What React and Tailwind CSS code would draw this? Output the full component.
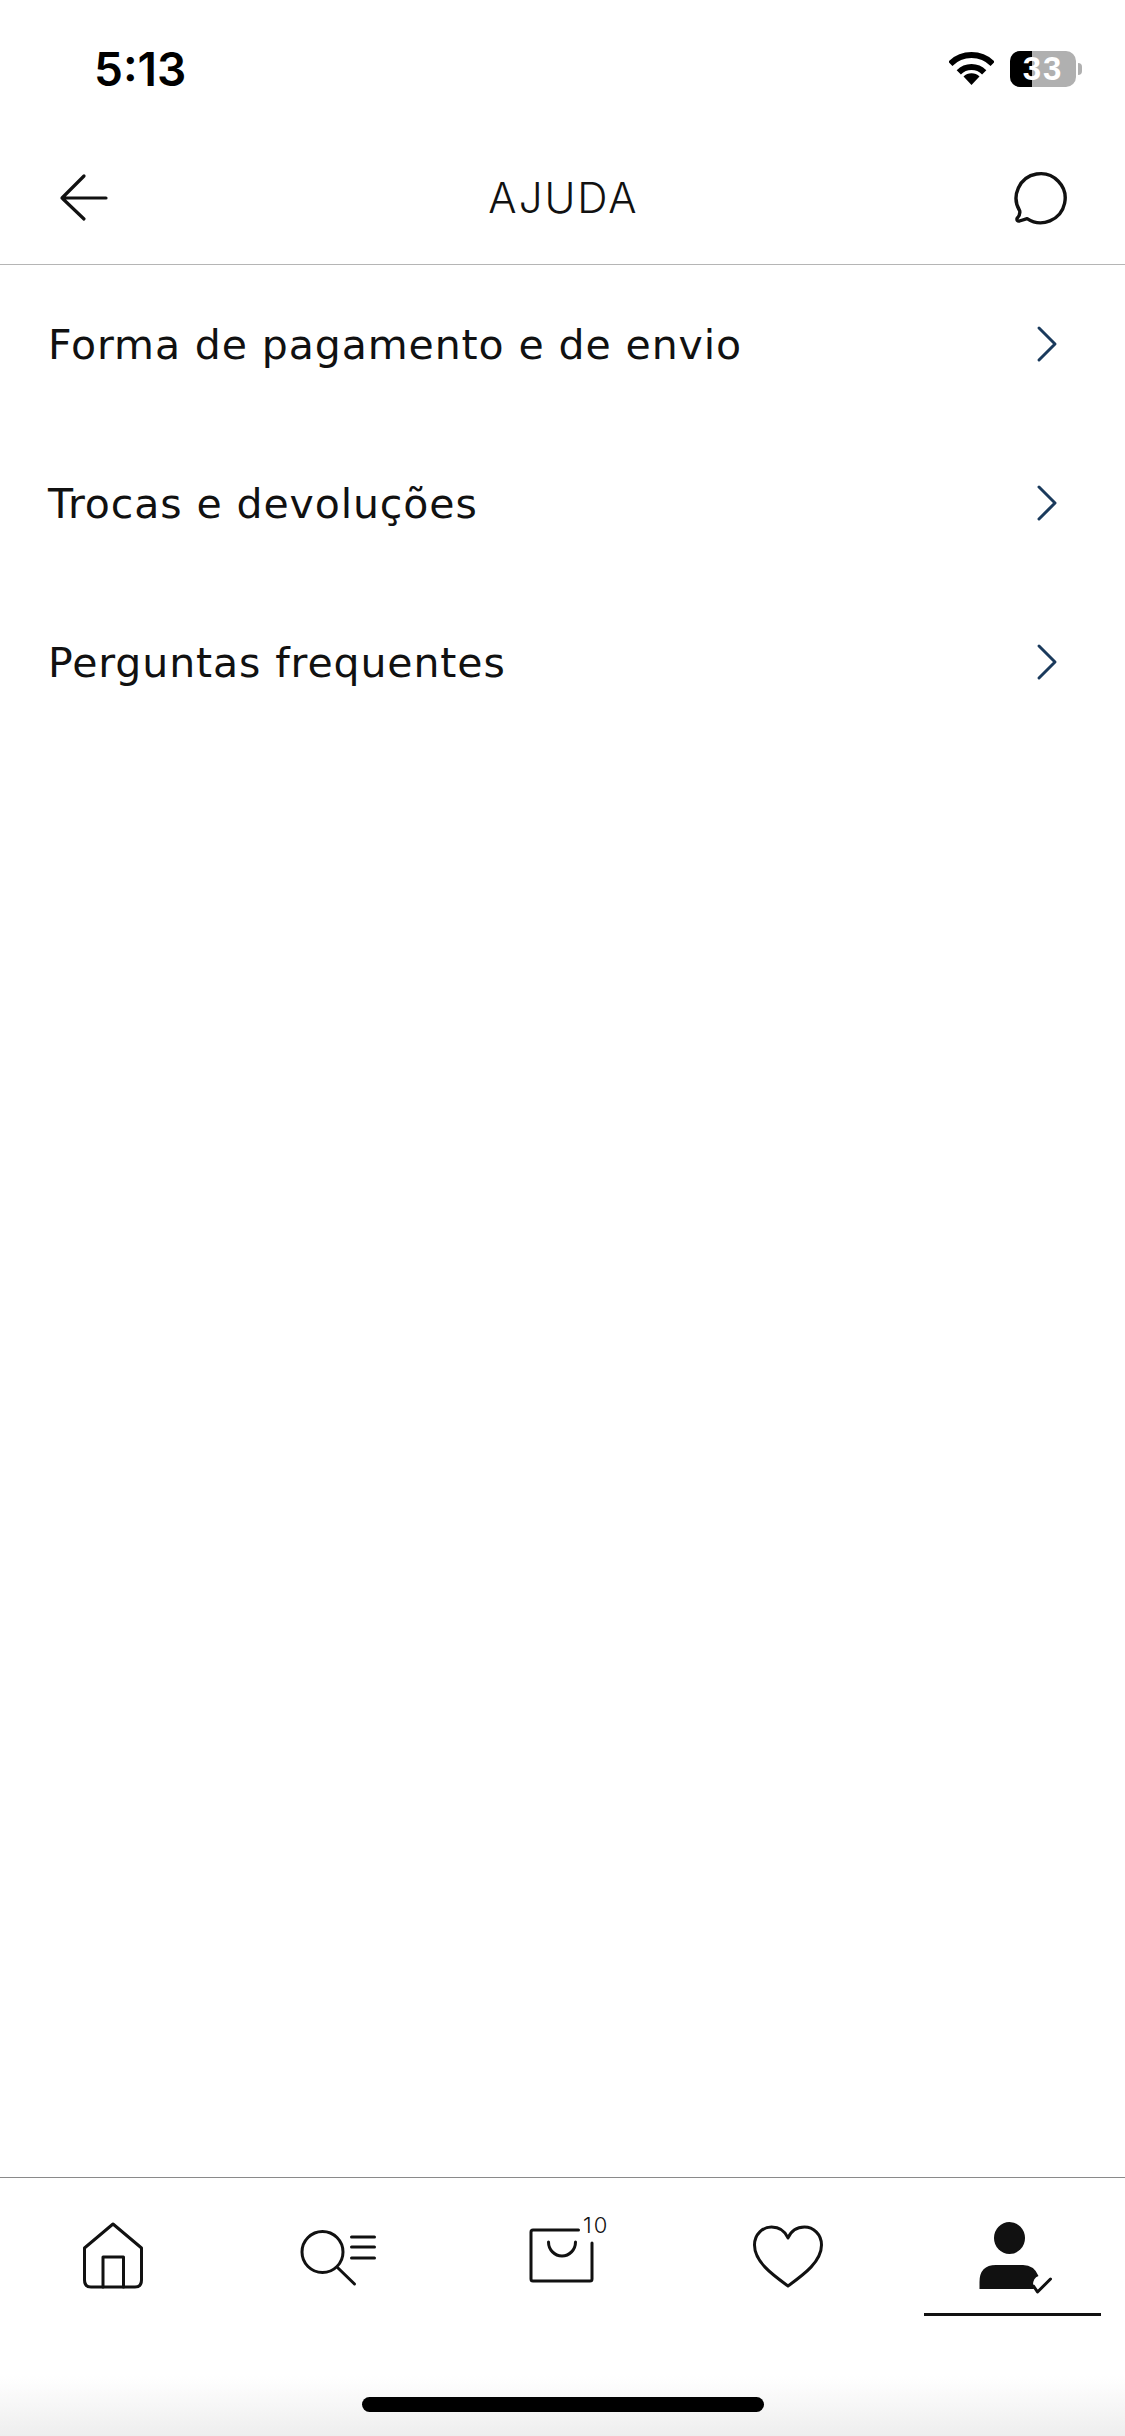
import React from 'react';

const helpItems = ['Forma de pagamento e de envio', 'Trocas e devoluções', 'Perguntas frequentes'];

const iconProps = {
    viewBox: '0 0 100 100',
    fill: 'none',
    stroke: '#111111',
    strokeWidth: 3,
    strokeLinecap: 'round',
    strokeLinejoin: 'round',
    className: 'block w-[100px] h-[100px] mx-auto',
};

const StatusBar = () => (
    <div className="h-[132px] flex items-start justify-between pl-[94px] pr-[43px]">
        <span className="mt-[43px] text-[46px] leading-[52px] font-semibold text-black font-['Inter',sans-serif]">5:13</span>
        <div className="flex items-start mt-[51px]">
            <svg viewBox="0 0 45 33" className="block w-[45px] h-[33px] mt-[1px] mr-[16px]">
                <path d="M1.3 11.8A30 30 0 0 1 43.7 11.8" fill="none" stroke="#000" strokeWidth="6" />
                <path d="M9.8 20.3A18 18 0 0 1 35.2 20.3" fill="none" stroke="#000" strokeWidth="6" />
                <path d="M22.5 33L14.5 24.5A11.5 11.5 0 0 1 30.5 24.5Z" fill="#000" />
            </svg>
            <div className="relative w-[66px] h-[36px] rounded-[10px] bg-[#b0b0b0] overflow-hidden flex items-center justify-center">
                <div className="absolute left-0 top-0 w-[22px] h-full bg-black" />
                <span className="relative text-[33px] leading-[36px] font-bold tracking-[2px] text-white font-['Liberation_Sans',sans-serif]">33</span>
            </div>
            <div className="w-[4px] h-[12px] mt-[12px] ml-[2px] rounded-r-full bg-[#b0b0b0]" />
        </div>
    </div>
);

const Header = () => (
    <header className="h-[133px] border-b border-[#b5b5b5] flex items-center justify-between pl-[40px] pr-[35px]">
        <svg {...iconProps} className="block w-[100px] h-[100px]" strokeWidth="3.2">
            <path d="M44 28L22 50L44 71M22 50H66" />
        </svg>
        <h1 className="mr-[3px] text-[42px] leading-[48px] font-light text-[#111111] tracking-[2px]">AJUDA</h1>
        <svg {...iconProps} className="block w-[100px] h-[100px]" strokeWidth="3.4">
            <path d="M37.1 70.6A24.5 24.5 0 1 0 29.7 62.9Q30.5 67 27 70.5Q26.5 73.5 29.5 73L37.1 70.6Z" />
        </svg>
    </header>
);

const HelpRow = ({ label }) => (
    <div className="h-[159px] flex items-center justify-between pl-[48px] pr-[25px]">
        <span className="text-[41px] leading-[48px] tracking-[0.9px] text-[#111111] font-['DejaVu_Sans',sans-serif]">{label}</span>
        <svg {...iconProps} className="block w-[100px] h-[100px]" stroke="#1a3a5c">
            <path d="M39 33L55 49L39 65" />
        </svg>
    </div>
);

const BottomNav = () => (
    <nav className="border-t border-[#8a8a8a]">
        <div className="grid grid-cols-5 h-[138px] pt-[32px]">
            <div>
                <svg {...iconProps}>
                    <path d="M50 14L21.5 38V70Q21.5 77 28 77H72Q78.5 77 78.5 70V38Z" />
                    <path d="M40 77V47H60.5V77" />
                </svg>
            </div>
            <div>
                <svg {...iconProps}>
                    <circle cx="34.5" cy="42" r="20.5" />
                    <path d="M50 58L66.5 74M63.5 27H86.5M63.5 37H86.5M63.5 48H86.5" />
                </svg>
            </div>
            <div className="relative">
                <svg {...iconProps}>
                    <path d="M65.5 20H20Q18 20 18 22V69Q18 71 20 71H77Q79 71 79 69V33" />
                    <path d="M35.5 32A13.5 14 0 0 0 62.5 32" />
                </svg>
                <span className="absolute left-[133px] top-[2px] text-[22px] leading-[26px] tracking-[2px] font-light text-[#111111]">10</span>
            </div>
            <div>
                <svg {...iconProps}>
                    <path d="M50 76C35 65 16.5 52 16.5 35C16.5 24 25 17 33.5 17C41 17 47 21 50 28C53 21 59 17 66.5 17C75 17 83.5 24 83.5 35C83.5 52 65 65 50 76Z" />
                </svg>
            </div>
            <div>
                <svg {...iconProps}>
                    <ellipse cx="46.5" cy="28" rx="15.5" ry="16" fill="#111111" stroke="none" />
                    <path d="M16.5 79V72Q16.5 55 33 55H60Q71 55 75.5 66Q70 68 70 75L71 79Z" fill="#111111" stroke="none" />
                    <path d="M70.5 76L74.5 82L87.5 69" />
                </svg>
                <div className="w-[177px] h-[3px] mt-[3px] mx-auto bg-[#111111]" />
            </div>
        </div>
        <div className="h-[120px] pt-[81px] flex justify-center bg-linear-to-b from-white from-50% to-[#eeeeee]">
            <div className="w-[402px] h-[15px] rounded-full bg-black" />
        </div>
    </nav>
);

const App = () => {
    return (
        <div className="w-[1125px] h-[2436px] bg-white flex flex-col font-['Inter',sans-serif]">
            <StatusBar />
            <Header />
            <main className="flex-1">
                {helpItems.map(item => (
                    <HelpRow key={item} label={item} />
                ))}
            </main>
            <BottomNav />
        </div>
    );
};

export default App;
